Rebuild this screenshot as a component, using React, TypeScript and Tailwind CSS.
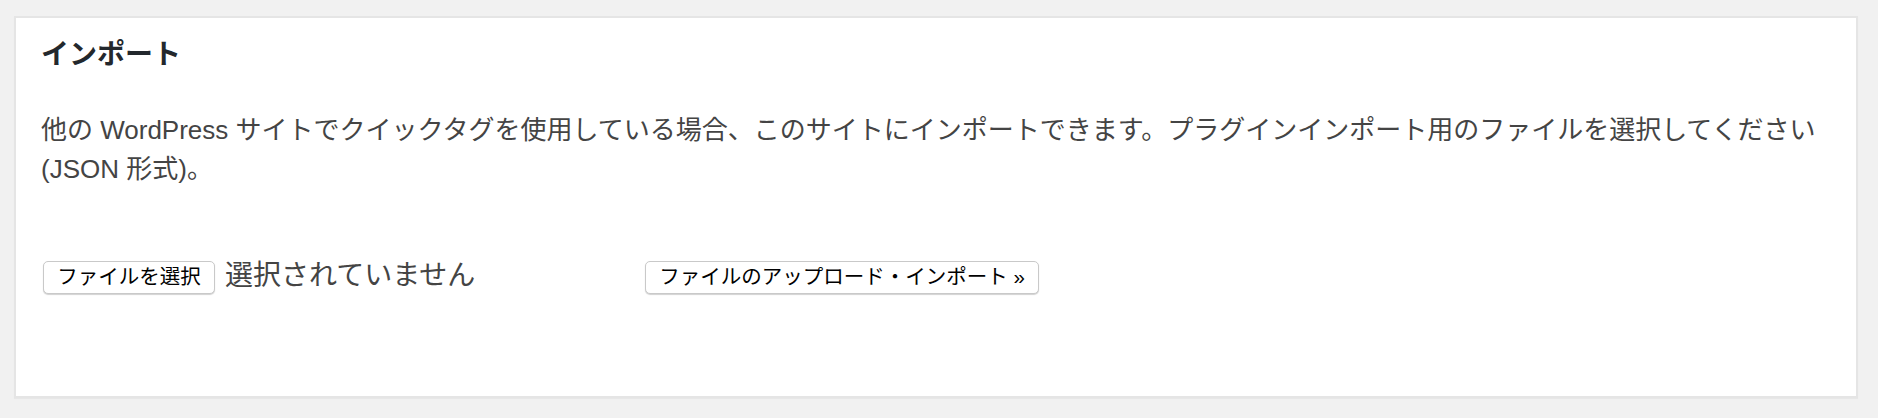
import React from 'react'

const font = {
  fontFamily: "'Liberation Sans', 'Noto Sans CJK JP', sans-serif",
}

function NativeButton({ children, className = '' }: { children: React.ReactNode; className?: string }) {
  return (
    <button
      type="button"
      className={`h-[33px] shrink-0 rounded-[5px] border border-[#c9c9c9] bg-white text-[20.5px] leading-none text-black shadow-[0_1px_1px_rgba(0,0,0,0.18)] ${className}`}
    >
      {children}
    </button>
  )
}

export default function App() {
  return (
    <div className="min-h-[418px] w-full bg-[#f1f1f1] pt-[16px] pl-[14px] pr-[20px]" style={font}>
      <div className="h-[382px] border-2 border-[#e5e5e5] bg-white px-[25px] pt-[17px] shadow-[0_1px_1px_rgba(0,0,0,0.04)]">
        {/* Heading */}
        <h2 className="text-[28px] font-bold leading-[40px] text-[#23282d]">インポート</h2>

        <p className="mt-[36px] text-[26px] leading-[39px] text-[#444]">
          他の WordPress サイトでクイックタグを使用している場合、このサイトにインポートできます。プラグインインポート用のファイルを選択してください
          (JSON 形式)。
        </p>

        {/* File upload row */}
        <div className="mt-[72px] flex items-center pl-[2px]">
          <div className="flex w-[602px] shrink-0 items-center">
            <NativeButton className="w-[172px]">ファイルを選択</NativeButton>
            <span className="ml-[10px] -mt-[3px] text-[28px] leading-none text-[#444]">選択されていません</span>
          </div>
          <NativeButton className="w-[394px]">ファイルのアップロード・インポート »</NativeButton>
        </div>
      </div>
    </div>
  )
}
